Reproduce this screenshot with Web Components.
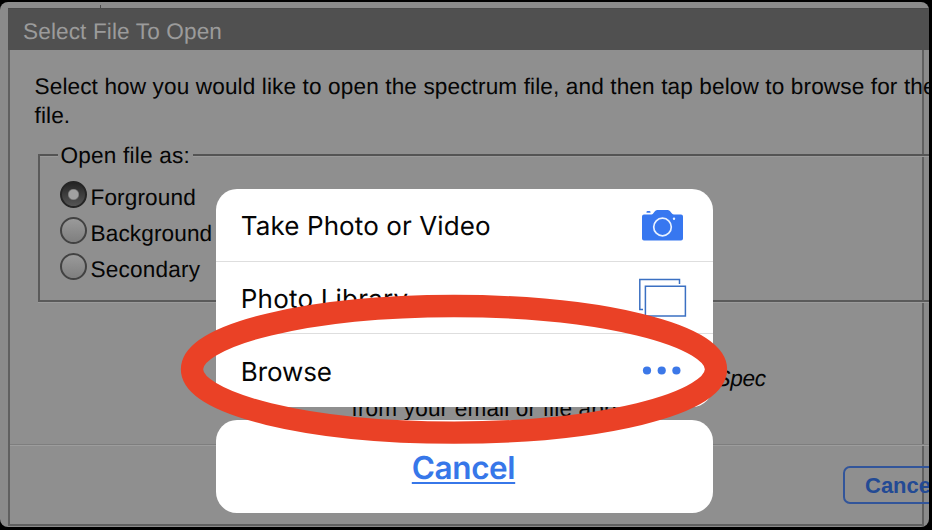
<!DOCTYPE html>
<html lang="en">
<head>
<meta charset="utf-8">
<title>Select File To Open</title>
<style>
  body { margin: 0; background: #000; overflow: hidden; }
</style>
</head>
<body>
<app-screen>
  <file-dialog heading="Select File To Open">
    <open-prompt></open-prompt>
    <option-group label="Open file as:">
      <radio-option checked>Forground</radio-option>
      <radio-option>Background</radio-option>
      <radio-option style="--ls:.2px">Secondary</radio-option>
    </option-group>
    <dialog-hint></dialog-hint>
    <dialog-footer slot="footer">Cancel</dialog-footer>
  </file-dialog>
  <action-sheet slot="over">
    <sheet-row style="--ls:.1px">Take Photo or Video<camera-icon slot="icon"></camera-icon></sheet-row>
    <sheet-row style="--ls:.2px">Photo Library<library-icon slot="icon"></library-icon></sheet-row>
    <sheet-row style="--ls:-.1px">Browse<more-icon slot="icon"></more-icon></sheet-row>
    <span slot="cancel">Cancel</span>
  </action-sheet>
  <highlight-ring slot="over"></highlight-ring>
</app-screen>
<script>
  const define = (name, html, setup) => customElements.define(name, class extends HTMLElement {
    constructor() {
      super();
      this.attachShadow({ mode: 'open' }).innerHTML = html;
      if (setup) setup(this, this.shadowRoot);
    }
  });

  define('app-screen', `<style>
    :host { display: block; position: relative; width: 932px; height: 530px; overflow: hidden; background: #000;
      font-family: "Liberation Sans", Arial, sans-serif; font-size: 22.6px; color: #050505;
      text-rendering: geometricPrecision; }
    .view { box-sizing: border-box; width: 929px; height: 525px; margin-top: 2px; padding: 6px 0 0 8px;
      background: #8b8b8b; border-radius: 8px; overflow: hidden; position: relative; }
    .tick { position: absolute; left: 100px; top: 3px; width: 1px; height: 4px; background: #4c4c4c; }
  </style><div class="view"><i class="tick"></i><slot></slot></div><slot name="over"></slot>`);

  define('file-dialog', `<style>
    :host { display: flex; flex-direction: column; box-sizing: border-box; width: 916px; height: 518px;
      border: 2px solid #606060; border-top: 0; background: #8f8f8f; }
    header { flex: none; width: 922px; margin-left: -2px; box-sizing: border-box; height: 42px; padding: 0 0 0 15px; line-height: 45px;
      background: #505050; color: #9b9b9b; white-space: nowrap; letter-spacing: .12px; border-top: 1px solid #4a4a4a; }
    main { flex: 1; padding: 22px 0 0 24.5px; min-height: 0; }
  </style><header></header><main><slot></slot></main><slot name="footer"></slot>`,
  (el, root) => { root.querySelector('header').textContent = el.getAttribute('heading'); });

  define('open-prompt', `<style>
    :host { display: block; line-height: 29px; white-space: nowrap; }
    div { letter-spacing: .12px; }
  </style><div>Select how you would like to open the spectrum file, and then tap below to browse for the</div><div>file.</div>`);

  define('option-group', `<style>
    :host { display: block; margin: 13px 0 0 3px; width: 920px; }
    fieldset { box-sizing: border-box; width: 920px; height: 159px; margin: 0; padding: 0 0 0 19px;
      border: 0; border-bottom: 2px solid #5a5a5a; position: relative; box-shadow: 0 1px #9b9b9b;
      background: linear-gradient(#545454 0 2px, #9a9a9a 2px) 0 11px / 100% 3px no-repeat; }
    .side { position: absolute; left: 0; top: 11px; bottom: 0; width: 2px; background: #5a5a5a; }
    legend { padding: 0 3px; line-height: 24px; background: #8f8f8f; float: left; margin: 1px 0 0 1px; letter-spacing: .2px; }
    .options { clear: both; padding-top: 8px; }
  </style><fieldset><i class="side"></i><legend></legend><div class="options"><slot></slot></div></fieldset>`,
  (el, root) => { root.querySelector('legend').textContent = el.getAttribute('label'); });

  define('radio-option', `<style>
    :host { display: flex; align-items: flex-start; gap: 4px; height: 36px; position: relative; top: 3px; }
    i { box-sizing: border-box; width: 27px; height: 27px; flex: none; border: 2px solid #424242; border-radius: 50%;
      background: linear-gradient(#9a9a9a, #7f7f7f); margin: 2px 0 0 3px; }
    :host([checked]) i { border-color: #252525;
      background: radial-gradient(circle, #a0a0a0 0 4.4px, #777 5.2px, transparent 6px), linear-gradient(#252525, #555); }
    span { line-height: 26px; padding-top: 6px; letter-spacing: var(--ls, .12px); }
  </style><i></i><span><slot></slot></span>`);

  define('dialog-hint', `<style>
    :host { display: block; width: 870px; margin-top: 62px; line-height: 30px; white-space: nowrap; }
    .name { padding-left: 681px; font-style: italic; letter-spacing: -.3px; }
    .from { padding-left: 317px; letter-spacing: .15px; }
  </style><div class="name">Spec</div><div class="from">from your email or file app</div>`);

  define('dialog-footer', `<style>
    :host { display: flex; justify-content: flex-start; box-sizing: border-box; height: 80px; width: 921px; flex: none;
      padding: 21px 0 0 833px; border-top: 1px solid #7e7e7e; box-shadow: inset 0 1px #9d9d9d; }
    button { box-sizing: border-box; flex: none; width: 114px; height: 38px; padding: 2px 0 0 20px; text-align: left;
      border: 2px solid #32559a; border-radius: 7px; background: none;
      font: bold 22px "Liberation Sans", Arial, sans-serif; color: #234a94; }
  </style><button><slot></slot></button>`);

  define('action-sheet', `<style>
    :host { position: absolute; left: 216px; top: 189px; width: 497px; display: flex; flex-direction: column; gap: 13px;
      font-family: Inter, "Liberation Sans", sans-serif; font-size: 26px; color: #050505; }
    .list, .cancel { background: #fff; border-radius: 21px; overflow: hidden; }
    .list { height: 218px; }
    .cancel { box-sizing: border-box; height: 93px; padding: 1px 2px 0 0; display: flex; align-items: center; justify-content: center; color: #3777e9;
      font-size: 31.5px; font-weight: 600; }
    u { letter-spacing: -.4px; text-decoration-thickness: 2px; text-underline-offset: 3px; text-decoration-skip-ink: none; }
  </style><div class="list"><slot></slot></div><div class="cancel"><u><slot name="cancel"></slot></u></div>`);

  define('sheet-row', `<style>
    :host { display: flex; align-items: center; justify-content: space-between; box-sizing: border-box; height: 72.6px;
      padding: 2px 26px 0 24.8px; border-bottom: 1px solid #dedede; letter-spacing: var(--ls, 0); }
    :host(:last-of-type) { border-bottom: 0; }
    span { padding-top: 2px; }
  </style><span><slot></slot></span><slot name="icon"></slot>`);

  define('camera-icon', `<style>:host { display: block; width: 47px; height: 40px; } svg { display: block; }</style>
    <svg width="47" height="40" viewBox="640 206 47 40">
      <path fill="#3777f0" d="M644 214.5H651.5C654 214.5 654 210 657.500 210H667.500C671 210 671 214.500 674 214.500H681Q683 214.500 683 216.500V238.500Q683 240.500 681 240.500H644Q642 240.500 642 238.500V216.500Q642 214.500 644 214.500ZM646.500 212Q646.500 211 647.500 211H649.500Q650.500 211 650.500 212V212.800H646.500Z"/>
      <circle cx="662.500" cy="227" r="8.800" fill="none" stroke="#e8f1ff" stroke-width="1.700"/>
      <circle cx="674" cy="218.700" r="1.200" fill="#e8f1ff"/>
    </svg>`);

  define('library-icon', `<style>:host { display: block; width: 48px; height: 40px; } svg { display: block; }</style>
    <svg width="48" height="40" viewBox="639 278 48 40" fill="none" stroke="#3b70c2" stroke-width="1.500">
      <path d="M679.500 284V279.500H639.800V309.500H643"/><path d="M645.400 286.300H685.400V316H645.400Z"/>
    </svg>`);

  define('more-icon', `<style>:host { display: block; width: 47px; height: 10px; } svg { display: block; }</style>
    <svg width="47" height="10" viewBox="640 366 47 10" fill="#3c78e8">
      <circle cx="647" cy="370.500" r="4.100"/><circle cx="661.700" cy="370.500" r="4.100"/><circle cx="676.400" cy="370.500" r="4.100"/>
    </svg>`);

  define('highlight-ring', `<style>
    :host { position: absolute; left: 180px; top: 293px; width: 548px; height: 153px; pointer-events: none; } svg { display: block; }
  </style><svg width="548" height="153" viewBox="180 293 548 153">
      <ellipse cx="454" cy="369.300" rx="262" ry="63.300" fill="none" stroke="#ea4126" stroke-width="22.300"/>
    </svg>`);
</script>
</body>
</html>
